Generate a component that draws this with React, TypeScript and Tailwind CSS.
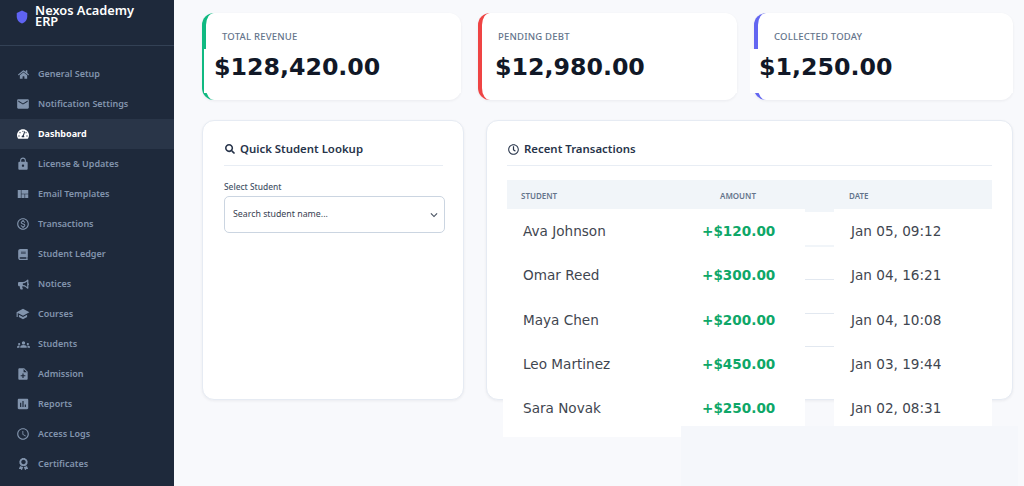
import { FaAward, FaBook, FaBullhorn, FaHome, FaRegClock, FaSearch, FaTachometerAlt } from 'react-icons/fa';
import {
  MdEmail,
  MdGroups,
  MdKeyboardArrowDown,
  MdLock,
  MdOutlineMonetizationOn,
  MdNoteAdd,
  MdSchool,
  MdSchedule,
  MdShield,
  MdViewQuilt,
  MdAssessment,
} from 'react-icons/md';

const navItems = [
  { label: 'General Setup', icon: FaHome, size: 'w-[11px] h-[11px] mx-[1.5px]' },
  { label: 'Notification Settings', icon: MdEmail, size: 'w-[14px] h-[14px]' },
  { label: 'Dashboard', icon: FaTachometerAlt, size: 'w-[12px] h-[12px] mx-[1px]', active: true },
  { label: 'License & Updates', icon: MdLock, size: 'w-[14px] h-[14px]' },
  { label: 'Email Templates', icon: MdViewQuilt, size: 'w-[14px] h-[14px]' },
  { label: 'Transactions', icon: MdOutlineMonetizationOn, size: 'w-[14px] h-[14px]' },
  { label: 'Student Ledger', icon: FaBook, size: 'w-[10px] h-[11px] mx-[2px]' },
  { label: 'Notices', icon: FaBullhorn, size: 'w-[11px] h-[11px] mx-[1.5px]' },
  { label: 'Courses', icon: MdSchool, size: 'w-[14px] h-[14px] -scale-x-100' },
  { label: 'Students', icon: MdGroups, size: 'w-[13px] h-[13px] mx-[0.5px]' },
  { label: 'Admission', icon: MdNoteAdd, size: 'w-[14px] h-[14px]' },
  { label: 'Reports', icon: MdAssessment, size: 'w-[14px] h-[14px]' },
  { label: 'Access Logs', icon: MdSchedule, size: 'w-[14px] h-[14px]' },
  { label: 'Certificates', icon: FaAward, size: 'w-[11px] h-[12px] mx-[1.5px]' },
];

const stats = [
  { label: 'Total Revenue', value: '$128,420.00', border: 'border-l-[#10b981]', shift: 'ml-[-2px] pl-[10px]' },
  { label: 'Pending Debt', value: '$12,980.00', border: 'border-l-[#ef4444]', shift: 'ml-[3px] pl-[10px]' },
  { label: 'Collected Today', value: '$1,250.00', border: 'border-l-[#6366f1]', shift: 'ml-[-8px] pl-[9px]' },
];

const transactions = [
  { name: 'Ava Johnson', amount: '+$120.00', date: 'Jan 05, 09:12' },
  { name: 'Omar Reed', amount: '+$300.00', date: 'Jan 04, 16:21' },
  { name: 'Maya Chen', amount: '+$200.00', date: 'Jan 04, 10:08' },
  { name: 'Leo Martinez', amount: '+$450.00', date: 'Jan 03, 19:44' },
  { name: 'Sara Novak', amount: '+$250.00', date: 'Jan 02, 08:31' },
];

function Sidebar() {
  return (
    <aside className="w-[174px] h-full shrink-0 bg-[#1e293b] overflow-hidden">
      <div className="h-[46px] border-b border-[#334155] flex items-start pl-[15px] pt-[4px]">
        <MdShield className="w-[14px] h-[14px] mt-[6px] text-[#5f63f2] shrink-0" />
        <div className="ml-[6px] text-white text-[12.8px] leading-[11px] font-semibold pt-[1px] w-[110px]">
          Nexos Academy ERP
        </div>
      </div>
      <nav className="pt-[13px]">
        {navItems.map(item => {
          const Icon = item.icon;
          return (
            <div
              key={item.label}
              className={`h-[30px] flex items-center pl-[16px] ${
                item.active ? 'bg-[#293548] text-white font-bold' : 'text-[#8294ad] font-semibold'
              }`}>
              <Icon className={`shrink-0 ${item.size}`} />
              <span className="ml-[8px] text-[9px] leading-[12px] whitespace-nowrap">{item.label}</span>
            </div>
          );
        })}
      </nav>
    </aside>
  );
}

function StatCard({ label, value, border, shift }: (typeof stats)[number]) {
  return (
    <div className={`h-[87px] rounded-xl bg-white border-l-4 ${border} shadow-[0_1px_3px_rgba(15,23,42,0.06)]`}>
      <div className="h-[36px] pt-[18px] pl-[16px] text-[9.5px] leading-[12px] uppercase tracking-[0.2px] font-medium text-[#64748b]">
        {label}
      </div>
      <div
        className={`h-[44px] bg-white leading-[37px] text-[23.7px] font-bold text-[#111827] font-['DejaVu_Sans',sans-serif] ${shift}`}>
        {value}
      </div>
    </div>
  );
}

function QuickLookup() {
  return (
    <div className="w-[262px] h-[280px] rounded-xl bg-white border border-[#e6ebf3] shadow-[0_1px_3px_rgba(15,23,42,0.06)] pl-[21px] pr-[20px]">
      <div className="h-[45px] border-b border-[#e8edf4] flex items-center pt-[12px] text-[#27344a]">
        <FaSearch className="w-[10px] h-[10px] ml-[1px]" />
        <span className="ml-[5px] text-[11.4px] font-semibold">Quick Student Lookup</span>
      </div>
      <div className="mt-[15px] text-[8.4px] leading-[12px] font-medium text-[#475569]">Select Student</div>
      <div className="mt-[3px] h-[37px] w-[221px] rounded-[5px] border border-[#cbd5e1] flex items-center justify-between pl-[8px] pr-[3px] pt-[1px] text-[#374151]">
        <span className="text-[8.8px]">Search student name...</span>
        <MdKeyboardArrowDown className="w-[14px] h-[14px] text-[#4b5563]" />
      </div>
    </div>
  );
}

function RecentTransactions() {
  return (
    <div className="flex-1 h-[280px] rounded-xl bg-white border border-[#e6ebf3] shadow-[0_1px_3px_rgba(15,23,42,0.06)] px-[20px]">
      <div className="h-[45px] border-b border-[#e8edf4] flex items-center pt-[12px] text-[#27344a]">
        <FaRegClock className="w-[11px] h-[11px] ml-[1px]" />
        <span className="ml-[5px] text-[11.4px] font-semibold">Recent Transactions</span>
      </div>
      <div className="mt-[14px] h-[29px] pt-[3px] bg-[#f1f5f9] flex items-center text-[8px] font-semibold uppercase text-[#64748b]">
        <span className="w-[213px] pl-[14px]">Student</span>
        <span className="w-[129px]">Amount</span>
        <span>Date</span>
      </div>
      <div className="flex ml-[-4px] font-['DejaVu_Sans',sans-serif] text-[13.6px] text-[#3f4650]">
        <div className="w-[178px] h-[228px] bg-white pl-[20px]">
          {transactions.map(t => (
            <div key={t.name} className="h-[44.33px] flex items-center">
              {t.name}
            </div>
          ))}
        </div>
        <div className="w-[124px] h-[217px] bg-white pl-[21px] font-bold text-[#0ea768]">
          {transactions.map(t => (
            <div key={t.name} className="h-[44.33px] flex items-center">
              {t.amount}
            </div>
          ))}
        </div>
        <div className="w-[29px]">
          <div className="h-[3px] bg-[#f1f5f9]" />
          <div className="h-[35px] border-b-2 border-[#f1f5f9]" />
          <div className="h-[33px] border-b border-[#e2e8f0]" />
          <div className="h-[34px] border-b border-[#e2e8f0]" />
          <div className="h-[33px] border-b border-[#e2e8f0]" />
        </div>
        <div className="w-[158px] h-[217px] bg-white pl-[17px]">
          {transactions.map(t => (
            <div key={t.name} className="h-[44.33px] flex items-center">
              {t.date}
            </div>
          ))}
        </div>
      </div>
    </div>
  );
}

export default function App() {
  return (
    <div className="w-[1024px] h-[486px] flex overflow-hidden bg-[#f8f9fc] font-['Noto_Sans',sans-serif]">
      <Sidebar />
      <main className="relative flex-1 pl-[28px] pr-[12px] pt-[13px]">
        <div className="grid grid-cols-3 gap-[17px]">
          {stats.map(s => (
            <StatCard key={s.label} {...s} />
          ))}
        </div>
        <div className="mt-[20px] flex gap-[22px]">
          <QuickLookup />
          <RecentTransactions />
        </div>
        <div className="absolute left-[507px] top-[426px] w-[337px] h-[60px] bg-[#f5f7fb]" />
      </main>
    </div>
  );
}
